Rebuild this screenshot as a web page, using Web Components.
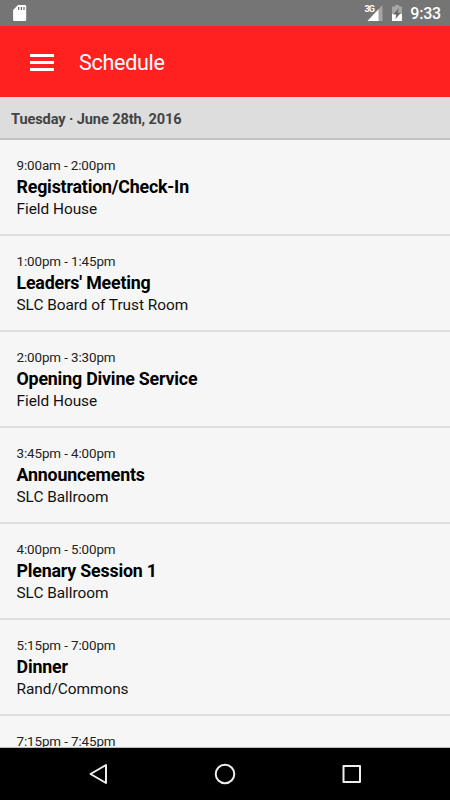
<!DOCTYPE html>
<html lang="en">
<head>
<meta charset="utf-8">
<meta name="viewport" content="width=device-width, initial-scale=1">
<title>Schedule</title>
<style>
    html, body { margin: 0; height: 100%; overflow: hidden; }
    body { font-family: Roboto, "Noto Sans", sans-serif; background: #f6f6f6; color: #000; }
</style>
</head>
<body>
<schedule-app>
    <status-bar slot="status" time="9:33"></status-bar>
    <app-toolbar slot="toolbar">Schedule</app-toolbar>
    <day-header>Tuesday · June 28th, 2016</day-header>
    <event-item time="9:00am - 2:00pm" place="Field House">Registration/Check-In</event-item>
    <event-item time="1:00pm - 1:45pm" place="SLC Board of Trust Room">Leaders' Meeting</event-item>
    <event-item time="2:00pm - 3:30pm" place="Field House">Opening Divine Service</event-item>
    <event-item time="3:45pm - 4:00pm" place="SLC Ballroom">Announcements</event-item>
    <event-item time="4:00pm - 5:00pm" place="SLC Ballroom">Plenary Session 1</event-item>
    <event-item time="5:15pm - 7:00pm" place="Rand/Commons">Dinner</event-item>
    <event-item time="7:15pm - 7:45pm"></event-item>
    <nav-bar slot="nav"></nav-bar>
</schedule-app>
<script>
    customElements.define('schedule-app', class extends HTMLElement {
        constructor() {
            super()
            this.attachShadow({mode: 'open'}).innerHTML = `
                <style>
                    :host { display: flex; flex-direction: column; height: 100vh; }
                    main { flex: 1; min-height: 0; overflow: hidden; border-bottom: 1px solid #bcbcbc; }
                </style>
                <slot name="status"></slot>
                <slot name="toolbar"></slot>
                <main><slot></slot></main>
                <slot name="nav"></slot>`
        }
    })

    customElements.define('status-bar', class extends HTMLElement {
        connectedCallback() {
            const time = this.getAttribute('time') || ''
            this.attachShadow({mode: 'open'}).innerHTML = `
                <style>
                    :host {
                        display: flex; align-items: flex-start; flex: none;
                        box-sizing: border-box; height: 26px; padding: 0 9px 0 12px;
                        background: #757575; color: #fff;
                    }
                    svg { display: block; height: 26px; flex: none; }
                    .sd { margin-right: auto; }
                    .network { font: 700 9px/9px Roboto, sans-serif; margin-top: 5px; letter-spacing: -.7px; }
                    .signal { margin-left: -7px; }
                    .battery { margin-left: 8px; }
                    .time { font-size: 16px; font-weight: 500; line-height: 27px; margin-left: 7px; letter-spacing: -.2px; }
                </style>
                <svg class="sd" width="16" viewBox="0 0 16 26">
                    <path fill="#fff" d="M6 5h7q1.200 0 1.200 1.200v13.500q0 1.300-1.200 1.300H2.400q-1.300 0-1.300-1.300V10z"/>
                    <path stroke="#666" stroke-width="1.200" d="M6.700 7v3M9.400 7v3M12 7v3"/>
                </svg>
                <span class="network">3G</span>
                <svg class="signal" width="16" viewBox="0 0 16 26">
                    <path fill="#a6a6a6" d="M15.500 5v16H.500z"/>
                    <path fill="#fff" d="M11.500 9.300V21H.500z"/>
                </svg>
                <svg class="battery" width="12" viewBox="0 0 12 26">
                    <path fill="#a6a6a6" d="M4 5h4v1.500h3V14H1V6.500h3z"/>
                    <path fill="#fff" d="M1 14h10v7H1z"/>
                    <path fill="#666" d="M7.800 8 2.200 14.500h3L4.500 19l5.300-6.200H6.600z"/>
                </svg>
                <span class="time">${time}</span>`
        }
    })

    customElements.define('app-toolbar', class extends HTMLElement {
        constructor() {
            super()
            this.attachShadow({mode: 'open'}).innerHTML = `
                <style>
                    :host {
                        display: flex; align-items: center; flex: none;
                        box-sizing: border-box; height: 71px; padding: 1px 30px 0;
                        background: #ff2020; color: #fff;
                    }
                    svg { display: block; margin: 2px 25px 0 0; }
                    span { font-size: 21.500px; line-height: 30px; letter-spacing: -.28px; padding-top: 1px; }
                </style>
                <svg width="24" height="18" viewBox="0 0 24 18">
                    <path fill="#fff" d="M0 0h24v3H0zM0 7h24v3H0zM0 14h24v3H0z"/>
                </svg>
                <span><slot></slot></span>`
        }
    })

    customElements.define('day-header', class extends HTMLElement {
        constructor() {
            super()
            this.attachShadow({mode: 'open'}).innerHTML = `
                <style>
                    :host {
                        display: block; box-sizing: border-box; height: 43px; padding: 1px 11px 0;
                        font-size: 14.600px; font-weight: 700; line-height: 43px; letter-spacing: -.12px;
                        background: #ddd; color: #444; border-bottom: 2px solid #c2c2c2;
                    }
                </style>
                <slot></slot>`
        }
    })

    customElements.define('event-item', class extends HTMLElement {
        connectedCallback() {
            const time = this.getAttribute('time') || ''
            const place = this.getAttribute('place') || ''
            this.attachShadow({mode: 'open'}).innerHTML = `
                <style>
                    :host {
                        display: block; box-sizing: border-box; height: 96px; padding: 15px 16.500px 0;
                        border-bottom: 2px solid #dedede;
                    }
                    .time { font-size: 13.400px; font-weight: 400; line-height: 21px; letter-spacing: -.1px; color: #222; }
                    .title { font-size: 17.800px; font-weight: 700; line-height: 22px; letter-spacing: -.18px; }
                    .place { font-size: 15.400px; line-height: 22px; color: #111; letter-spacing: -.03px; }
                </style>
                <div class="time">${time}</div>
                <div class="title"><slot></slot></div>
                <div class="place">${place}</div>`
        }
    })

    customElements.define('nav-bar', class extends HTMLElement {
        constructor() {
            super()
            this.attachShadow({mode: 'open'}).innerHTML = `
                <style>
                    :host {
                        display: flex; justify-content: center; align-items: center; flex: none;
                        gap: 102.500px; height: 52px; background: #000;
                    }
                    svg { display: block; fill: none; stroke: #eee; stroke-width: 2; stroke-linejoin: round; }
                </style>
                <svg width="24" height="24" viewBox="0 0 24 24"><path d="M19 3v18L3.500 12z"/></svg>
                <svg width="24" height="24" viewBox="0 0 24 24"><circle cx="12" cy="12" r="9.300"/></svg>
                <svg width="24" height="24" viewBox="0 0 24 24"><path d="M3.500 4h16.500v16H3.500z"/></svg>`
        }
    })
</script>
</body>
</html>
